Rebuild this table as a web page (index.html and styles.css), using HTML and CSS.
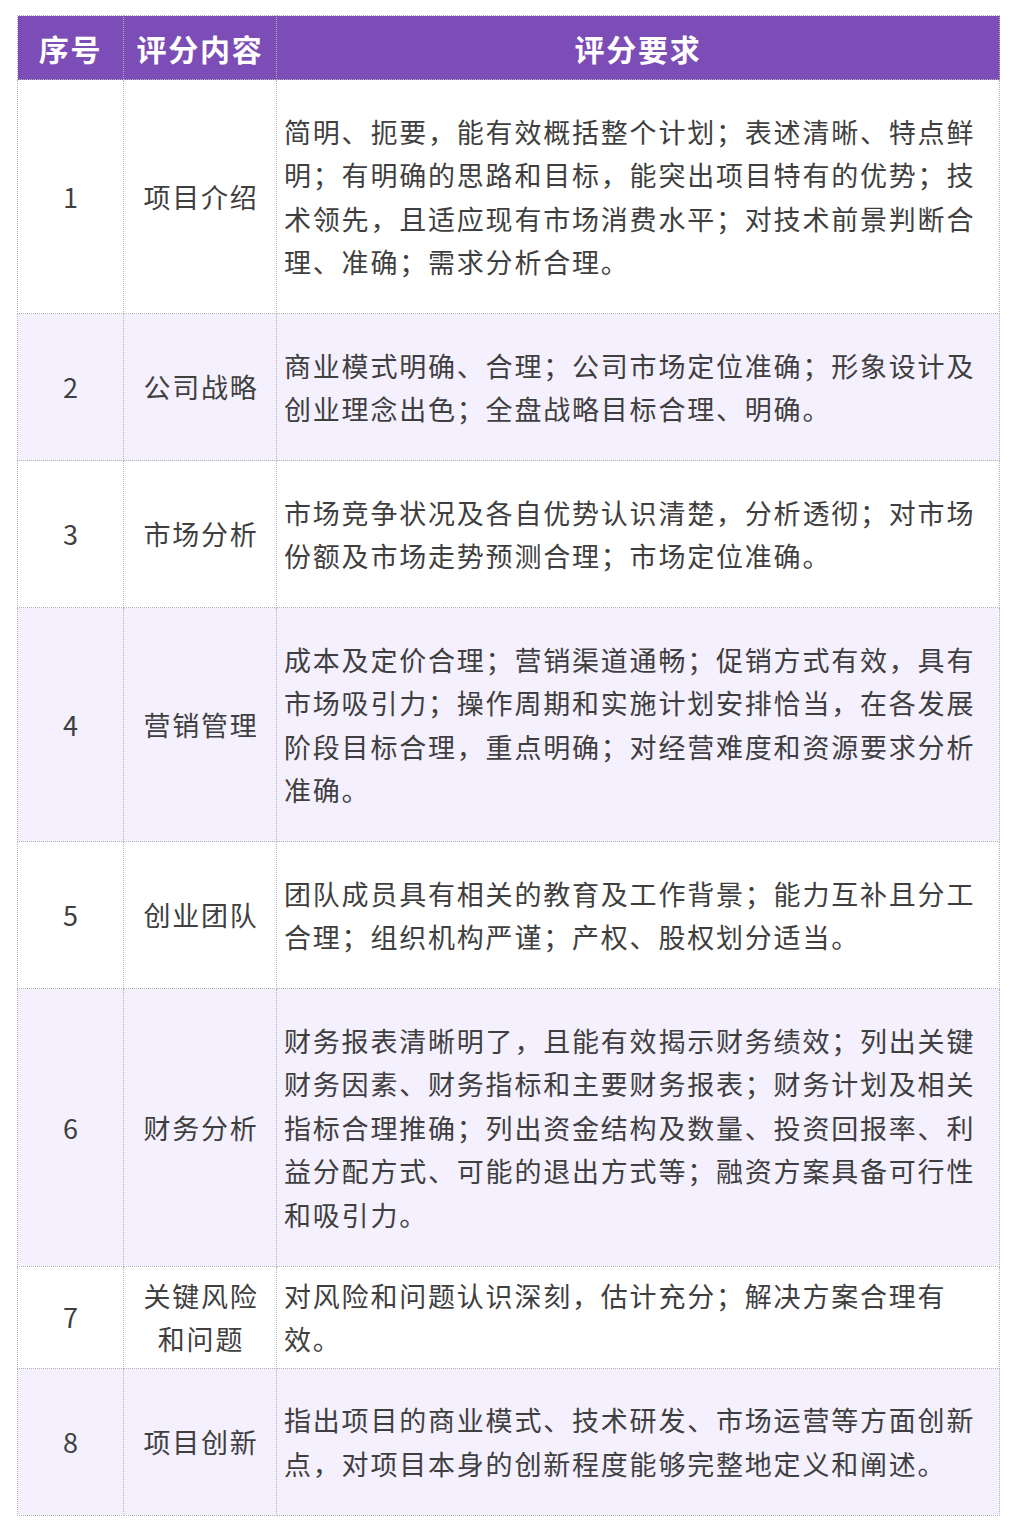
FILE: index.html
```html
<!DOCTYPE html>
<html lang="zh">
<head>
<meta charset="utf-8">
<title>评分要求</title>
<link rel="stylesheet" href="styles.css">
</head>
<body>
<table class="score">
  <colgroup>
    <col class="c-no">
    <col class="c-item">
    <col class="c-req">
  </colgroup>
  <thead>
    <tr><th>序号</th><th>评分内容</th><th>评分要求</th></tr>
  </thead>
  <tbody>
    <tr class="roomy">
      <td class="no">1</td><td class="item">项目介绍</td>
      <td class="req">简明、扼要，能有效概括整个计划；表述清晰、特点鲜明；有明确的思路和目标，能突出项目特有的优势；技术领先，且适应现有市场消费水平；对技术前景判断合理、准确；需求分析合理。</td>
    </tr>
    <tr class="roomy alt">
      <td class="no">2</td><td class="item">公司战略</td>
      <td class="req">商业模式明确、合理；公司市场定位准确；形象设计及创业理念出色；全盘战略目标合理、明确。</td>
    </tr>
    <tr class="roomy">
      <td class="no">3</td><td class="item">市场分析</td>
      <td class="req">市场竞争状况及各自优势认识清楚，分析透彻；对市场份额及市场走势预测合理；市场定位准确。</td>
    </tr>
    <tr class="roomy alt">
      <td class="no">4</td><td class="item">营销管理</td>
      <td class="req">成本及定价合理；营销渠道通畅；促销方式有效，具有市场吸引力；操作周期和实施计划安排恰当，在各发展阶段目标合理，重点明确；对经营难度和资源要求分析准确。</td>
    </tr>
    <tr class="roomy">
      <td class="no">5</td><td class="item">创业团队</td>
      <td class="req">团队成员具有相关的教育及工作背景；能力互补且分工合理；组织机构严谨；产权、股权划分适当。</td>
    </tr>
    <tr class="roomy alt">
      <td class="no">6</td><td class="item">财务分析</td>
      <td class="req">财务报表清晰明了，且能有效揭示财务绩效；列出关键财务因素、财务指标和主要财务报表；财务计划及相关指标合理推确；列出资金结构及数量、投资回报率、利益分配方式、可能的退出方式等；融资方案具备可行性和吸引力。</td>
    </tr>
    <tr class="tight">
      <td class="no">7</td><td class="item">关键风险<br>和问题</td>
      <td class="req">对风险和问题认识深刻，估计充分；解决方案合理有效。</td>
    </tr>
    <tr class="roomy alt">
      <td class="no">8</td><td class="item">项目创新</td>
      <td class="req">指出项目的商业模式、技术研发、市场运营等方面创新点，对项目本身的创新程度能够完整地定义和阐述。</td>
    </tr>
  </tbody>
</table>
</body>
</html>
```

FILE: styles.css
```css
html, body {
  margin: 0;
  padding: 0;
  background: #ffffff;
}
body {
  padding: 15px 0 0 17px;
  font-family: "Noto Sans CJK SC", "Noto Sans", sans-serif;
  color: #3f3f3f;
}
.score {
  border-collapse: collapse;
  table-layout: fixed;
  width: 982px;
}
.c-no { width: 106px; }
.c-item { width: 153px; }
.c-req { width: 723px; }

.score th,
.score td {
  border: 1px dotted #b3b3b3;
}
.score th {
  background: #7c4db7;
  color: #ffffff;
  font-size: 30px;
  font-weight: 700;
  letter-spacing: 1.8px;
  height: 63px;
  padding: 0;
  line-height: 40px;
  text-align: center;
  vertical-align: middle;
}
.score td {
  font-size: 27px;
  letter-spacing: 1.8px;
  line-height: 43.5px;
  vertical-align: middle;
  padding: 7px 0 7px 7px;
}
.score td.no,
.score td.item {
  text-align: center;
  padding-left: 2px;
  padding-right: 0;
}
.score td.req {
  text-align: left;
  padding-left: 7px;
  padding-right: 0;
}
.roomy td {
  padding-top: 29.5px;
  padding-bottom: 29.5px;
}
.alt td {
  background: #f5f0fe;
}
```
